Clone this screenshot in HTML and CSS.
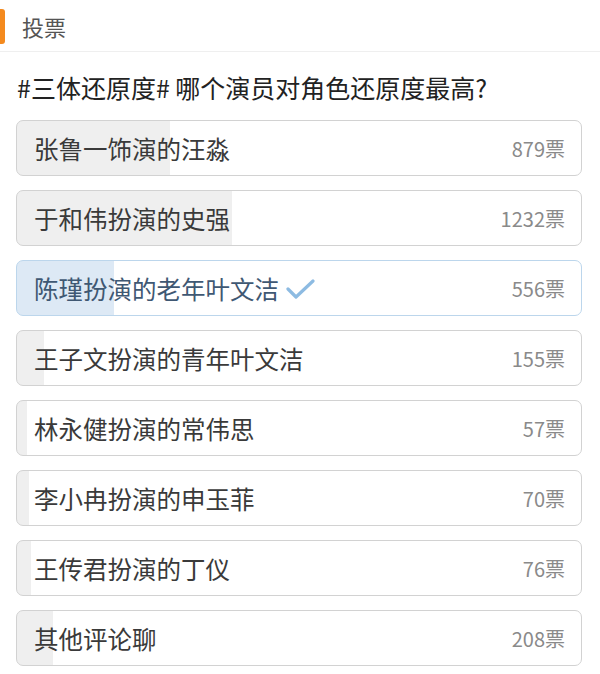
FILE: index.html
```html
<!DOCTYPE html>
<html lang="zh-CN">
<head>
  <meta charset="UTF-8" />
  <meta name="viewport" content="width=device-width, initial-scale=1.0"/>
  <title>投票</title>
  <link rel="stylesheet" href="styles.css">
</head>
<body>

  <header class="vote-header">
    <span class="bar"></span>
    <h2>投票</h2>
  </header>

  <main>
    <h1 class="vote-title">#三体还原度# 哪个演员对角色还原度最高?</h1>

    <!-- 填充宽度 = 票数 / 总票数 (3233) -->
    <ul class="options">
      <li class="option" style="--pct: 27.2%"><span class="name">张鲁一饰演的汪淼</span><span class="count">879票</span></li>
      <li class="option" style="--pct: 38.1%"><span class="name">于和伟扮演的史强</span><span class="count">1232票</span></li>
      <li class="option chosen" style="--pct: 17.2%">
        <span class="name">陈瑾扮演的老年叶文洁</span>
        <svg class="check" width="30" height="22" viewBox="0 0 30 22"><polyline points="3,11 11,19 28,3" fill="none" stroke="#8dbbe2" stroke-width="3.2" stroke-linecap="round" stroke-linejoin="round"/></svg>
        <span class="count">556票</span>
      </li>
      <li class="option" style="--pct: 4.8%"><span class="name">王子文扮演的青年叶文洁</span><span class="count">155票</span></li>
      <li class="option" style="--pct: 1.8%"><span class="name">林永健扮演的常伟思</span><span class="count">57票</span></li>
      <li class="option" style="--pct: 2.2%"><span class="name">李小冉扮演的申玉菲</span><span class="count">70票</span></li>
      <li class="option" style="--pct: 2.4%"><span class="name">王传君扮演的丁仪</span><span class="count">76票</span></li>
      <li class="option" style="--pct: 6.4%"><span class="name">其他评论聊</span><span class="count">208票</span></li>
    </ul>
  </main>

</body>
</html>
```

FILE: styles.css
```css
body {
  margin: 0;
  padding: 0;
  background-color: #fff;
  font-family: "Noto Sans CJK SC", "Noto Sans", sans-serif;
  color: #2a2a2a;
}
.vote-header {
  height: 51px;
  display: flex;
  align-items: center;
  border-bottom: 1px solid #efefef;
}
.vote-header .bar {
  width: 5px;
  height: 35px;
  margin-top: 1px;
  background-color: #f48a1e;
  border-radius: 0 3px 3px 0;
}
.vote-header h2 {
  margin: 0 0 0 17px;
  font-size: 22px;
  font-weight: normal;
  color: #555;
}
main {
  padding: 0 18px 0 16px;
}
.vote-title {
  margin: 0;
  padding: 20px 0 17px 1px;
  font-size: 25px;
  line-height: 31px;
  font-weight: normal;
  color: #222;
}
.options {
  list-style: none;
  margin: 0;
  padding: 0;
  display: flex;
  flex-direction: column;
  gap: 14px;
}
.option {
  height: 54px;
  display: flex;
  align-items: center;
  padding: 0 16px 0 17px;
  border: 1px solid #d2d2d2;
  border-radius: 7px;
  background: linear-gradient(to right, #efefef var(--pct), #fff var(--pct));
}
.option .name {
  font-size: 24.5px;
  color: #3a3a3a;
}
.option .count {
  margin-left: auto;
  font-size: 20px;
  color: #8a8a8a;
}
.option.chosen {
  border-color: #bcd6ec;
  background: linear-gradient(to right, #dde9f5 var(--pct), #fff var(--pct));
}
.option.chosen .name {
  color: #3f5873;
}
.option .check {
  margin-left: 6px;
  margin-top: 2px;
}
```
